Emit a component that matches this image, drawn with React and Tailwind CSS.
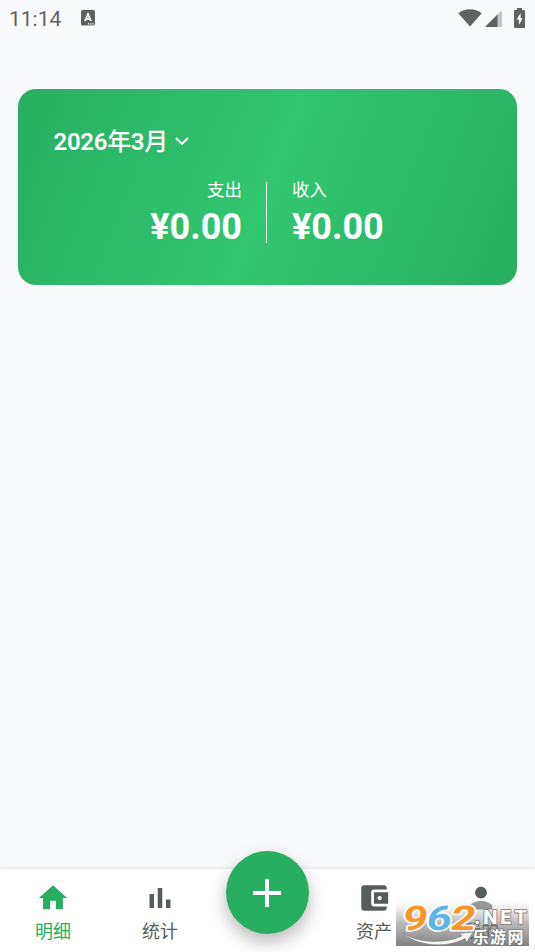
import clsx from 'clsx'

const NAV_ITEMS = [
  { label: '明细', path: 'M10 20v-6h4v6h5v-8h3L12 3 2 12h3v8z', active: true },
  { label: '统计', path: 'M4.6 9.2h3.2V19H4.6zM10.4 5h3.2v14h-3.2zM16.2 13h3.2v6h-3.2z' },
  null,
  {
    label: '资产',
    path: 'M21 18v1c0 1.1-.9 2-2 2H5c-1.11 0-2-.9-2-2V5c0-1.1.89-2 2-2h14c1.1 0 2 .9 2 2v1h-9c-1.11 0-2 .9-2 2v8c0 1.1.89 2 2 2h9zm-9-2h10V8H12v8zm4-2.5c-.83 0-1.5-.67-1.5-1.5s.67-1.5 1.5-1.5 1.5.67 1.5 1.5-.67 1.5-1.5 1.5z',
  },
  {
    label: '我的',
    path: 'M12 12.4c2.3 0 4.2-1.9 4.2-4.2S14.3 4 12 4 7.8 5.9 7.8 8.2s1.9 4.2 4.2 4.2zm0 1.8c-2.67 0-8 1.34-8 4v2h16v-2c0-2.66-5.33-4-8-4z',
  },
]

function StatusBar() {
  return (
    <div className="h-9 flex items-center justify-between pl-[9px] pr-[10px] text-[#5f6163]">
      <div className="flex items-center gap-[20px]">
        <span className="text-[21px] leading-9 pt-[2px]">11:14</span>
        <svg width="14" height="16" viewBox="0 0 14 16">
          <rect width="14" height="15.5" rx="1.5" fill="currentColor" />
          <path d="M4 11 7 4l3 7M5 9h4" fill="none" stroke="#fff" strokeWidth="1.8" />
          <path d="M7 13.8h1.3M9.2 13.8h1.3M11.4 13.8h1.3" stroke="#fff" strokeWidth="1.2" />
        </svg>
      </div>
      <div className="flex items-center">
        <svg width="24" height="18" viewBox="0 0 24 18" className="mr-[3px]">
          <path d="M.3 4.2C7-1 17-1 23.7 4.2L12 17.6z" fill="currentColor" />
        </svg>
        <svg width="17" height="17" viewBox="0 0 17 17" className="mr-[12px]">
          <path d="M17 0v17H0z" fill="#c3c5c7" />
          <path d="M12.5 4.5V17H0z" fill="currentColor" />
        </svg>
        <svg width="11" height="20" viewBox="0 0 11 20" className="-mt-[1px]">
          <path d="M3 0h5v2h2q1 0 1 1v16q0 1-1 1H1q-1 0-1-1V3q0-1 1-1h2z" fill="currentColor" />
          <path d="M6.6 5 2.6 11.6h2.3V17l3.7-6.8H6.6z" fill="#fff" />
        </svg>
      </div>
    </div>
  )
}

function SummaryCard() {
  return (
    <section className="mx-[18px] mt-[53px] h-[196px] rounded-[18px] pt-[36px] text-white bg-[linear-gradient(111.4deg,#28ae60_0%,#32c670_50%,#28ae60_100%)]">
      <div className="flex items-center pl-[35.5px] h-[34px]">
        <h1 className="text-2xl font-semibold leading-[34px] tracking-[-0.3px]">
          2026<span className="font-medium">年</span>3<span className="font-medium">月</span>
        </h1>
        <svg width="18" height="18" viewBox="0 0 18 18" className="ml-[5px] -mt-[2px]">
          <path d="M3 6l6 6 6-6" fill="none" stroke="currentColor" strokeWidth="1.9" />
        </svg>
      </div>
      <div className="flex justify-center mt-[17px] -ml-[1px]">
        <div className="flex-1 text-right pr-[24px] pt-[1px]">
          <p className="text-[17.5px] leading-[26px]">支出</p>
          <p className="text-[36px] leading-[40px] font-bold mt-[4px]">¥0.00</p>
        </div>
        <div className="w-px h-[61px] mt-[6px] bg-white/90" />
        <div className="flex-1 pl-[25px] pr-0 pt-[1px]">
          <p className="text-[17.5px] leading-[26px]">收入</p>
          <p className="text-[36px] leading-[40px] font-bold mt-[4px]">¥0.00</p>
        </div>
      </div>
    </section>
  )
}

function Watermark() {
  return (
    <svg
      className="absolute left-[396px] top-[23px]"
      width="139"
      height="60"
      viewBox="0 0 139 60"
    >
      <defs>
        <linearGradient id="shade" x1="0" y1="0" x2="0" y2="1">
          <stop offset="0" stopColor="#fff" stopOpacity="0.4" />
          <stop offset="0.1" stopColor="#eee" stopOpacity="0.42" />
          <stop offset="0.5" stopColor="#808080" stopOpacity="0.55" />
          <stop offset="1" stopColor="#505050" stopOpacity="0.72" />
        </linearGradient>
      </defs>
      <rect y="8" width="133" height="46" fill="url(#shade)" />
      <path
        d="M6.5 41C22 51 48 52 66 44l-2.5-2.5L77 40l-6.5 10.5-1.5-4C50 57 20 54 6.5 41z"
        fill="#f6f6f6"
        stroke="#777"
        strokeWidth="0.6"
      />
      <g
        fontFamily="Roboto"
        fontWeight="700"
        fontSize="34"
        stroke="#fff"
        strokeWidth="3"
        paintOrder="stroke"
        strokeLinejoin="round"
        transform="translate(5.3 0) skewX(-9)"
      >
        <text x="6" y="38" textLength="25" lengthAdjust="spacingAndGlyphs" fill="#f8962a">9</text>
        <text x="30" y="38" textLength="25" lengthAdjust="spacingAndGlyphs" fill="#5fb4e6">6</text>
        <text x="54" y="38" textLength="25" lengthAdjust="spacingAndGlyphs" fill="#f8962a">2</text>
      </g>
      <g fill="#fff" stroke="#777" strokeWidth="1.6" paintOrder="stroke" strokeLinejoin="round">
        <text x="78" y="32" fontFamily="Inter" fontWeight="800" fontSize="18.5" textLength="53">.NET</text>
        <g fontFamily="Noto Sans CJK SC" fontWeight="700" fontSize="16">
          <text x="76.5" y="51">乐</text>
          <text x="94" y="51">游</text>
          <text x="111.5" y="51">网</text>
        </g>
      </g>
    </svg>
  )
}

function BottomNav() {
  return (
    <nav className="relative h-[83px] bg-white shadow-[0_-1px_3px_rgba(0,0,0,0.08)]">
      <div className="grid grid-cols-5">
        {NAV_ITEMS.map((item, i) =>
          item ? (
            <button
              key={item.label}
              className={clsx(
                'flex flex-col items-center pt-[12px]',
                item.active ? 'text-[#28ae60]' : 'text-[#555e5a]'
              )}
            >
              <svg width="34" height="34" viewBox="0 0 24 24" fill="currentColor" className="-ml-[1px]">
                <path d={item.path} />
              </svg>
              <span className="text-[18px] leading-[26px] mt-[4px] -ml-[1px]">{item.label}</span>
            </button>
          ) : (
            <div key={i} />
          )
        )}
      </div>
      {/* Floating add button */}
      <button className="absolute left-[226px] -top-[18px] w-[83px] h-[83px] rounded-full bg-[#28ae60] text-white flex items-center justify-center shadow-[0_8px_18px_rgba(0,0,0,0.28)]">
        <svg width="48" height="48" viewBox="0 0 24 24" fill="currentColor" className="-ml-[1px]">
          <path d="M19 13h-6v6h-2v-6H5v-2h6V5h2v6h6z" />
        </svg>
      </button>
      <Watermark />
    </nav>
  )
}

export default function App() {
  return (
    <div className="h-[952px] flex flex-col overflow-hidden bg-[#f9fafc] font-[Roboto,'Noto_Sans_CJK_SC',sans-serif]">
      <StatusBar />
      <main className="flex-1">
        <SummaryCard />
      </main>
      <BottomNav />
    </div>
  )
}
